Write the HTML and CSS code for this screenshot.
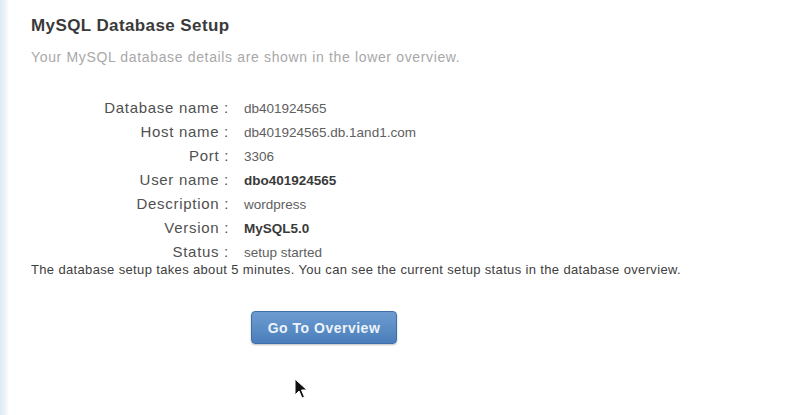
FILE: index.html
```html
<!DOCTYPE html>
<html>
<head>
<meta charset="utf-8">
<link rel="stylesheet" href="styles.css">
</head>
<body>
<div class="page">
  <div class="strip"></div>
  <main class="content">
    <h1 class="title">MySQL Database Setup</h1>
    <p class="subtitle">Your MySQL database details are shown in the lower overview.</p>
    <div class="details">
      <div class="label">Database name :</div><div class="value">db401924565</div>
      <div class="label">Host name :</div><div class="value">db401924565.db.1and1.com</div>
      <div class="label">Port :</div><div class="value">3306</div>
      <div class="label">User name :</div><div class="value strong">dbo401924565</div>
      <div class="label">Description :</div><div class="value">wordpress</div>
      <div class="label">Version :</div><div class="value strong">MySQL5.0</div>
      <div class="label">Status :</div><div class="value">setup started</div>
    </div>
    <p class="note">The database setup takes about 5 minutes. You can see the current setup status in the database overview.</p>
    <div class="actions">
      <button class="btn">Go To Overview</button>
    </div>
  </main>
  <svg class="cursor" width="14" height="22" viewBox="0 0 14 22">
    <path d="M1 1 L1 17 L5 13 L8 20 L10.5 19 L7.5 12 L13 12 Z" fill="#111" stroke="#fff" stroke-width="1"/>
  </svg>
</div>
</body>
</html>
```

FILE: styles.css
```css
html, body {
  margin: 0;
  padding: 0;
  background: #ffffff;
}
body {
  font-family: "Liberation Sans", Arial, sans-serif;
  width: 792px;
  height: 415px;
  overflow: hidden;
}
.page {
  position: relative;
  display: flex;
  height: 415px;
}
.strip {
  width: 9px;
  flex: none;
  background: linear-gradient(to right, #dde9f3, #eef4f9 60%, #ffffff);
}
.content {
  flex: 1;
  padding: 16px 0 0 22px;
}
.title {
  margin: 0;
  font-size: 17px;
  line-height: 20px;
  font-weight: bold;
  color: #3a3a3a;
  letter-spacing: 0.4px;
}
.subtitle {
  margin: 13px 0 0 0;
  font-size: 14px;
  line-height: 16px;
  color: #a8a8a8;
  letter-spacing: 0.65px;
}
.details {
  display: grid;
  grid-template-columns: 198px auto;
  column-gap: 15px;
  margin-top: 31px;
  align-items: baseline;
}
.label {
  text-align: right;
  font-size: 15px;
  line-height: 24px;
  color: #505050;
  letter-spacing: 0.7px;
}
.value {
  font-size: 13.5px;
  line-height: 22px;
  color: #606060;
}
.value.strong {
  font-weight: bold;
  color: #3a3a3a;
}
.note {
  margin: -2px 0 0 0;
  font-size: 13px;
  line-height: 16px;
  color: #404040;
  letter-spacing: 0.35px;
}
.actions {
  padding-left: 220px;
  margin-top: 33px;
}
.btn {
  width: 146px;
  height: 33px;
  border: 1px solid #3e6fa8;
  border-radius: 4px;
  background: linear-gradient(to bottom, #6c9cd1, #4b7eba);
  color: #edf3fa;
  font-family: "Liberation Sans", Arial, sans-serif;
  font-size: 14px;
  font-weight: bold;
  letter-spacing: 0.5px;
  box-shadow: 0 1px 2px rgba(0,0,0,0.25);
  padding: 0;
}
.cursor {
  position: absolute;
  left: 294px;
  top: 378px;
}
```
